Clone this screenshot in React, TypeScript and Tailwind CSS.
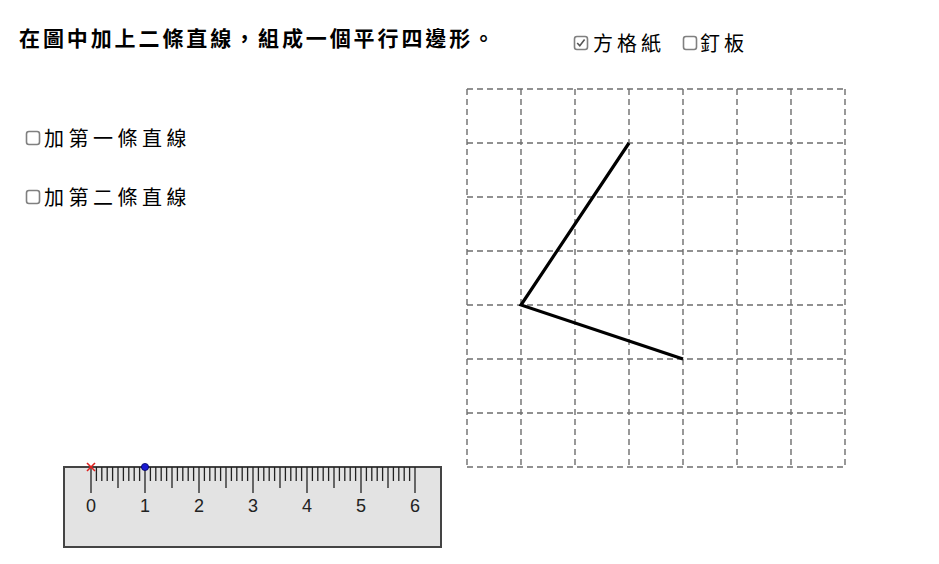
import React from "react";

const cjk = { fontFamily: '"Noto Sans CJK TC", "Noto Sans", sans-serif' };

function Box({ checked }: { checked?: boolean }) {
  return (
    <svg width="16" height="16" viewBox="0 0 16 16" className="shrink-0 block w-[16px] h-[16px]">
      <rect x="1.5" y="1.5" width="13" height="13" rx="2.4" fill="white" stroke="#808080" strokeWidth="1.6" />
      {checked && <path d="M4.2 8 L6.8 10.8 L11.6 4.6" fill="none" stroke="#555" strokeWidth="1.6" />}
    </svg>
  );
}

function Grid() {
  const step = 54;
  const n = 7;
  const o = 1;
  const lines = [];
  for (let i = 0; i <= n; i++) {
    const p = o + i * step;
    lines.push(<line key={"v" + i} x1={p} y1={o} x2={p} y2={o + n * step} />);
    lines.push(<line key={"h" + i} x1={o} y1={p} x2={o + n * step} y2={p} />);
  }
  return (
    <svg width="382" height="382" viewBox="0 0 382 382" className="block">
      <g stroke="#6e6e6e" strokeWidth="1.4" strokeDasharray="6 4" fill="none">
        {lines}
      </g>
      <polyline
        points={`${o + 162},${o + 54} ${o + 54},${o + 216} ${o + 216},${o + 270}`}
        fill="none"
        stroke="#000"
        strokeWidth="3.2"
        strokeLinejoin="miter"
      />
    </svg>
  );
}

function Ruler() {
  const top = 8;
  const x0 = 30;
  const ticks = [];
  for (let i = 0; i <= 60; i++) {
    const x = x0 + i * 5.4;
    const len = i % 10 === 0 ? 26 : i % 5 === 0 ? 21 : 14;
    ticks.push(<line key={i} x1={x} y1={top} x2={x} y2={top + len} />);
  }
  const labels = [];
  for (let k = 0; k <= 6; k++) {
    labels.push(
      <text
        key={k}
        x={x0 + k * 54}
        y={top + 45}
        textAnchor="middle"
        fontSize="18"
        fill="#222"
        fontFamily='"Liberation Sans", Arial, sans-serif'
      >
        {k}
      </text>
    );
  }
  return (
    <svg width="384" height="92" viewBox="0 0 384 92" className="block">
      <rect x="3" y={top} width="377" height="80" fill="#e3e3e3" stroke="#444" strokeWidth="2" />
      <g stroke="#222" strokeWidth="1.3">{ticks}</g>
      {labels}
      <g stroke="#e0201e" strokeWidth="1.6">
        <line x1={x0 - 4} y1={top - 4} x2={x0 + 4} y2={top + 4} />
        <line x1={x0 - 4} y1={top + 4} x2={x0 + 4} y2={top - 4} />
      </g>
      <circle cx={x0 + 54} cy={top} r="3.6" fill="#1a1ad0" stroke="#000066" strokeWidth="0.8" />
    </svg>
  );
}

export default function App() {
  return (
    <div className="w-[939px] h-[564px] bg-white overflow-hidden text-black" style={cjk}>
      <div className="flex h-[88px]">
        <div className="w-[573px] pl-[19px] pt-[22px]">
          <div className="text-[21px] leading-[30px] font-bold tracking-[2.9px] whitespace-nowrap">
            在圖中加上二條直線，組成一個平行四邊形。
          </div>
        </div>
        <div className="flex items-center pt-[28px] h-[58px] text-[20px] tracking-[4px] whitespace-nowrap">
          <Box checked />
          <span className="ml-[4px]">方格紙</span>
          <span className="ml-[17px]">
            <Box />
          </span>
          <span className="ml-[2px]">釘板</span>
        </div>
      </div>
      <div className="flex">
        <div className="w-[466px] flex flex-col">
          <div className="pl-[25px] pt-[36px] flex flex-col gap-[31px] text-[20px] leading-[28px] tracking-[4.5px]">
            <div className="flex items-center">
              <Box />
              <span className="ml-[3px]">加第一條直線</span>
            </div>
            <div className="flex items-center">
              <Box />
              <span className="ml-[3px]">加第二條直線</span>
            </div>
          </div>
          <div className="pl-[61px] mt-[248px]">
            <Ruler />
          </div>
        </div>
        <div>
          <Grid />
        </div>
      </div>
    </div>
  );
}
